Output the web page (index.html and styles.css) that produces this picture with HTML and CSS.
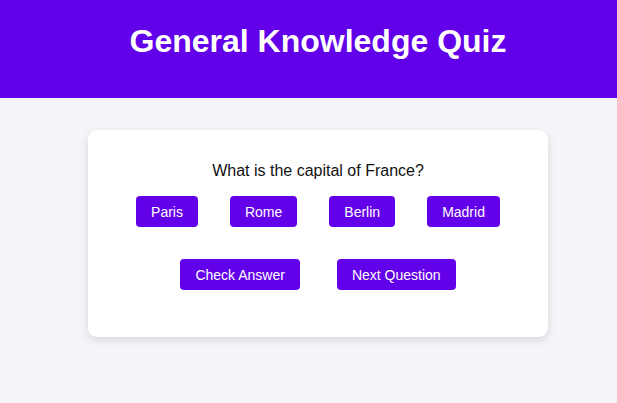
FILE: index.html
```html
<!DOCTYPE html>
<html lang="en">
<head>
<meta charset="utf-8">
<title>General Knowledge Quiz</title>
<link rel="stylesheet" href="styles.css">
</head>
<body>
<div class="page">
  <header class="site-header">
    <h1 class="title">General Knowledge Quiz</h1>
  </header>
  <main class="main">
    <section class="card">
      <p class="question">What is the capital of France?</p>
      <div class="options">
        <button class="btn">Paris</button>
        <button class="btn">Rome</button>
        <button class="btn">Berlin</button>
        <button class="btn">Madrid</button>
      </div>
      <div class="controls">
        <button class="btn">Check Answer</button>
        <button class="btn">Next Question</button>
      </div>
    </section>
  </main>
</div>
</body>
</html>
```

FILE: styles.css
```css
html, body {
  margin: 0;
  padding: 0;
}
html {
  overflow: hidden;
}
body {
  background: #f4f4f9;
  font-family: "Liberation Sans", Arial, sans-serif;
  color: #111;
}
.page {
  width: 636px;
  height: 403px;
}
.site-header {
  background: #6200ea;
  color: #fff;
  text-align: center;
  padding: 23px 20px 38px;
}
.title {
  margin: 0;
  font-family: "Liberation Sans", Arial, sans-serif;
  font-weight: 700;
  font-size: 32px;
  line-height: 37px;
}
.main {
  padding-top: 32px;
}
.card {
  width: 460px;
  box-sizing: border-box;
  margin: 0 auto;
  background: #fff;
  border-radius: 9px;
  box-shadow: 0 3px 8px rgba(0, 0, 0, 0.12);
  padding: 32px 20px 47px;
  text-align: center;
}
.question {
  margin: 0 0 16px;
  font-size: 16px;
}
.options,
.controls {
  display: flex;
  justify-content: center;
}
.options {
  gap: 32px;
}
.controls {
  gap: 37px;
  margin-top: 32px;
}
.btn {
  font-family: "Liberation Sans", Arial, sans-serif;
  font-size: 14px;
  line-height: 16px;
  color: #fff;
  background: #6200ea;
  border: none;
  border-radius: 4px;
  padding: 7.5px 15px;
  cursor: pointer;
}
```
